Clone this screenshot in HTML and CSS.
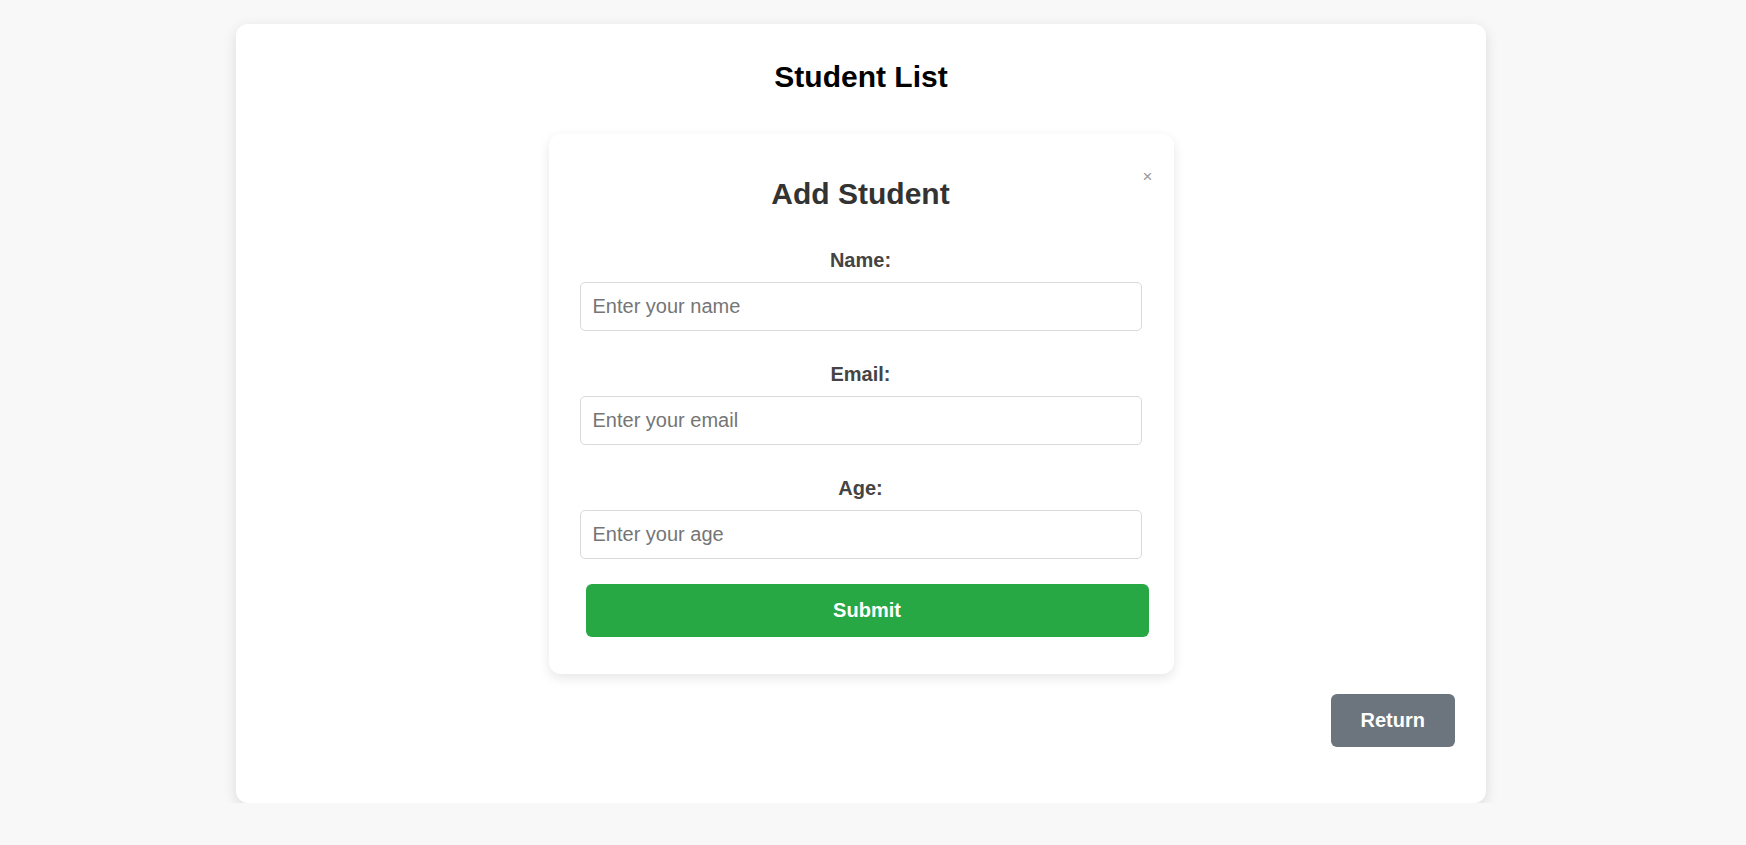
FILE: index.html
```html
<!DOCTYPE html>
<html lang="en">
<head>
<meta charset="utf-8">
<title>Student List</title>
<link rel="stylesheet" href="styles.css">
</head>
<body>
  <div class="card">
    <h1 class="page-title">Student List</h1>
    <div class="modal">
      <span class="close">&times;</span>
      <h2 class="modal-title">Add Student</h2>
      <form class="form">
        <div class="group">
          <label class="label" for="name">Name:</label>
          <input class="input" id="name" type="text" placeholder="Enter your name">
        </div>
        <div class="group">
          <label class="label" for="email">Email:</label>
          <input class="input" id="email" type="email" placeholder="Enter your email">
        </div>
        <div class="group last">
          <label class="label" for="age">Age:</label>
          <input class="input" id="age" type="number" placeholder="Enter your age">
        </div>
        <button type="button" class="btn submit">Submit</button>
      </form>
    </div>
    <div class="actions">
      <button type="button" class="btn return">Return</button>
    </div>
  </div>
</body>
</html>
```

FILE: styles.css
```css
* { box-sizing: border-box; }

html, body {
  margin: 0;
  padding: 0;
  background: #f8f8f8;
  font-family: "Liberation Sans", Arial, sans-serif;
}

body {
  padding-top: 24px;
}

.card {
  width: 1250px;
  margin-left: 236px;
  background: #ffffff;
  border-radius: 12px;
  box-shadow: 0 4px 14px rgba(0, 0, 0, 0.12);
  padding: 36px 31px 56px 31px;
  display: flex;
  flex-direction: column;
}

.page-title {
  margin: 0;
  font-size: 30px;
  font-weight: bold;
  color: #000;
  text-align: center;
  line-height: 34.5px;
}

.modal {
  position: relative;
  align-self: center;
  width: 625px;
  margin-top: 39px;
  background: #fff;
  border-radius: 12px;
  box-shadow: 0 4px 12px rgba(0, 0, 0, 0.1);
  padding: 30px 32px 37px 31px;
}

.close {
  position: absolute;
  top: 33px;
  right: 21px;
  font-size: 17px;
  line-height: 20px;
  color: #999;
  cursor: pointer;
}

.modal-title {
  margin: 13px 0 38px;
  font-size: 30px;
  line-height: 34.5px;
  font-weight: bold;
  color: #333;
  text-align: center;
}

.form {
  display: flex;
  flex-direction: column;
}

.group {
  display: flex;
  flex-direction: column;
  margin-bottom: 32px;
}

.group.last {
  margin-bottom: 25px;
}

.label {
  font-size: 20px;
  line-height: 23px;
  font-weight: bold;
  color: #444;
  text-align: center;
  margin-bottom: 10px;
}

.input {
  width: 562px;
  height: 49px;
  padding: 12px 12px;
  font-family: "Liberation Sans", Arial, sans-serif;
  font-size: 20px;
  line-height: 23px;
  color: #333;
  border: 1px solid #d9d9d9;
  border-radius: 5px;
  background: #fff;
  outline: none;
}

.input::placeholder {
  color: #757575;
}

.btn {
  font-family: "Liberation Sans", Arial, sans-serif;
  font-size: 20px;
  line-height: 23px;
  font-weight: bold;
  color: #fff;
  border: none;
  border-radius: 6px;
  padding: 15px 30px;
  cursor: pointer;
}

.submit {
  width: 563px;
  margin-left: 6px;
  background: #28a745;
}

.actions {
  display: flex;
  justify-content: flex-end;
  margin-top: 20px;
}

.return {
  background: #6c757d;
}
```
